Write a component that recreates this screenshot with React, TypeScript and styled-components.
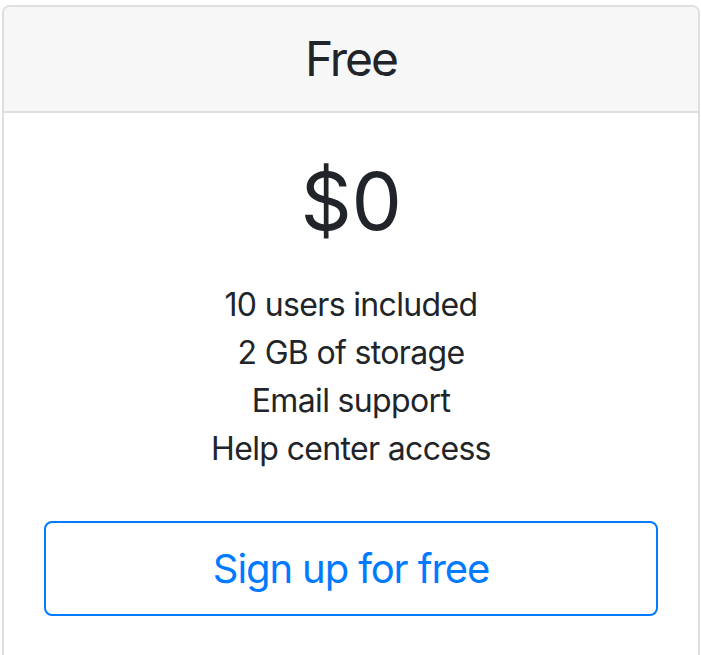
import React from "react";
import styled, { createGlobalStyle } from "styled-components";

const GlobalStyle = createGlobalStyle`
  html, body {
    margin: 0;
    padding: 0;
    background: #ffffff;
  }
  body {
    font-family: Inter, "Noto Sans", "Liberation Sans", sans-serif;
    color: #212529;
    -webkit-font-smoothing: antialiased;
  }
  * { box-sizing: border-box; }
`;

const Page = styled.div`
  padding: 5px 2px 0 2px;
  height: 655px;
  overflow: hidden;
`;

const Card = styled.div`
  display: flex;
  flex-direction: column;
  width: 698px;
  border: 2px solid #dfdfdf;
  border-radius: 8px;
  background: #ffffff;
  overflow: hidden;
`;

const CardHeader = styled.div`
  background: #f7f7f7;
  border-bottom: 2px solid #dfdfdf;
  padding: 23px 40px;
  text-align: center;
`;

const PlanName = styled.h4`
  margin: 0;
  font-size: 48px;
  font-weight: 400;
  line-height: 58px;
  letter-spacing: -2px;
`;

const CardBody = styled.div`
  display: flex;
  flex-direction: column;
  padding: 40px 40px 80px 40px;
  text-align: center;
`;

const Price = styled.h1`
  margin: 0;
  font-size: 80px;
  font-weight: 400;
  line-height: 96px;
  letter-spacing: -0.5px;
`;

const Features = styled.ul`
  list-style: none;
  margin: 32px 0 48px 0;
  padding: 0;
`;

const Feature = styled.li`
  font-size: 32px;
  line-height: 48px;
  letter-spacing: -0.65px;
`;

const OutlineButton = styled.button`
  display: block;
  width: 100%;
  height: 95px;
  padding: 16px 32px;
  font-family: inherit;
  font-size: 40px;
  line-height: 60px;
  letter-spacing: -1.1px;
  color: #007bff;
  background: transparent;
  border: 2px solid #007bff;
  border-radius: 8px;
  cursor: pointer;
`;

const features = [
  "10 users included",
  "2 GB of storage",
  "Email support",
  "Help center access",
];

export default function App() {
  return (
    <>
      <GlobalStyle />
      <Page>
        <Card>
          <CardHeader>
            <PlanName>Free</PlanName>
          </CardHeader>
          <CardBody>
            <Price>$0</Price>
            <Features>
              {features.map((f) => (
                <Feature key={f}>{f}</Feature>
              ))}
            </Features>
            <OutlineButton type="button">Sign up for free</OutlineButton>
          </CardBody>
        </Card>
      </Page>
    </>
  );
}
